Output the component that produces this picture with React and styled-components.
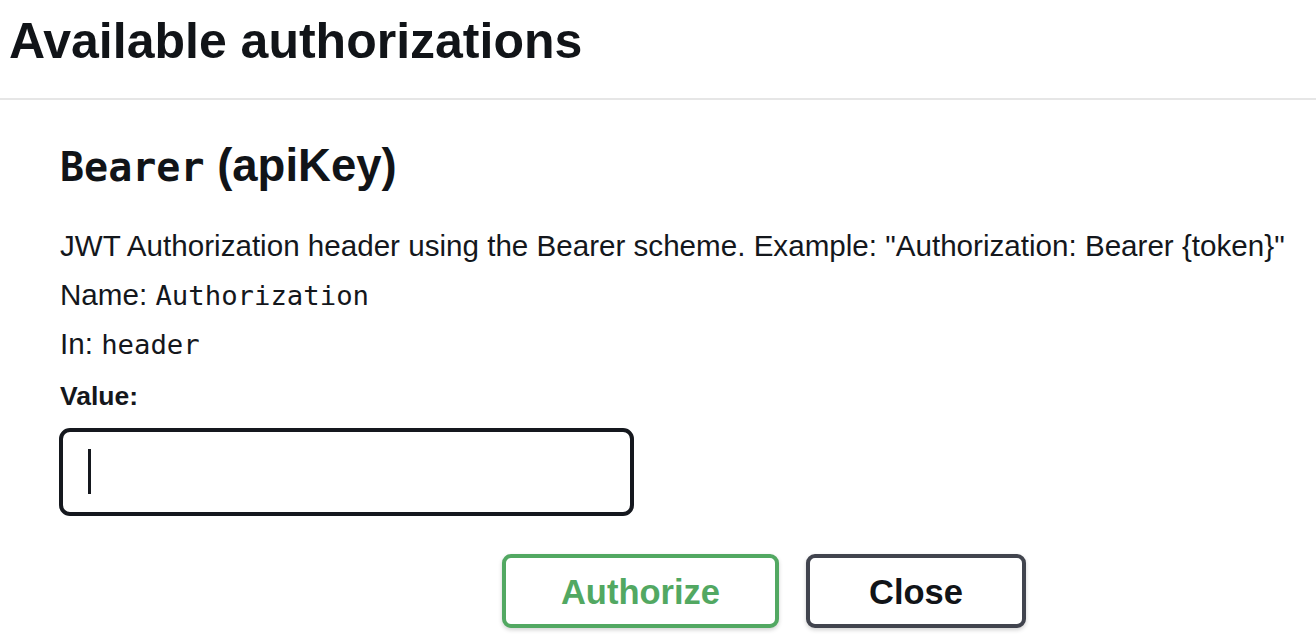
import React from "react";
import styled, { createGlobalStyle } from "styled-components";

const Global = createGlobalStyle`
  html, body { margin: 0; padding: 0; background: #fff; }
  body { font-family: "Liberation Sans", Arial, sans-serif; color: #14171c; }
`;

const Page = styled.div`
  width: 1316px;
  height: 639px;
  overflow: hidden;
  background: #fff;
`;

const Header = styled.div`
  height: 100px;
  box-sizing: border-box;
  padding: 12px 0 0 9px;
  border-bottom: 2px solid #e6e6e6;
`;

const Title = styled.h3`
  margin: 0;
  font-size: 50px;
  font-weight: 700;
  line-height: 58px;
  color: #111418;
`;

const Body = styled.div`
  padding: 40px 0 0 60px;
`;

const SchemeTitle = styled.h4`
  margin: 0;
  font-family: "Liberation Sans", Arial, sans-serif;
  font-size: 45.5px;
  font-weight: 700;
  line-height: 52px;
  color: #111418;
`;

const Code = styled.code`
  font-family: "DejaVu Sans Mono", monospace;
  font-size: ${(p) => p.$size || 27.3}px;
  font-weight: ${(p) => (p.$bold ? 700 : 400)};
`;

const Info = styled.p`
  margin: 0;
  font-size: 29.6px;
  line-height: 48.5px;
  color: #14171c;
`;

const Desc = styled(Info)`
  margin-top: 29px;
`;

const Label = styled.label`
  display: block;
  margin-top: 6px;
  font-size: 26.5px;
  font-weight: 700;
  line-height: 40px;
  color: #14171c;
`;

const Input = styled.div`
  margin-top: 12px;
  margin-left: -1px;
  width: 575px;
  height: 88px;
  box-sizing: border-box;
  border: 4px solid #15181e;
  border-radius: 11px;
  display: flex;
  align-items: center;
  padding-left: 25px;
`;

const Caret = styled.span`
  display: block;
  width: 3px;
  height: 45px;
  background: #15181e;
`;

const Buttons = styled.div`
  display: flex;
  gap: 27px;
  margin-top: 38px;
  margin-left: 442px;
`;

const Button = styled.button`
  width: ${(p) => p.$w}px;
  height: 74px;
  box-sizing: border-box;
  background: #fff;
  border: 4px solid ${(p) => p.$color};
  color: ${(p) => p.$text};
  border-radius: 9px;
  font-family: "Liberation Sans", Arial, sans-serif;
  font-size: 34.5px;
  font-weight: 700;
  box-shadow: 0 2px 4px rgba(0, 0, 0, 0.18);
  cursor: pointer;
  padding: 4px 0 0;
`;

export default function App() {
  return (
    <Page>
      <Global />
      <Header>
        <Title>Available authorizations</Title>
      </Header>
      <Body>
        <SchemeTitle>
          <Code $size={40} $bold>Bearer</Code> (apiKey)
        </SchemeTitle>
        <Desc>
          JWT Authorization header using the Bearer scheme. Example: "Authorization: Bearer {"{token}"}"
        </Desc>
        <Info>
          Name: <Code>Authorization</Code>
        </Info>
        <Info>
          In: <Code>header</Code>
        </Info>
        <Label>Value:</Label>
        <Input>
          <Caret />
        </Input>
        <Buttons>
          <Button $w={277} $color="#52a862" $text="#52a862">Authorize</Button>
          <Button $w={220} $color="#41444e" $text="#111418">Close</Button>
        </Buttons>
      </Body>
    </Page>
  );
}
